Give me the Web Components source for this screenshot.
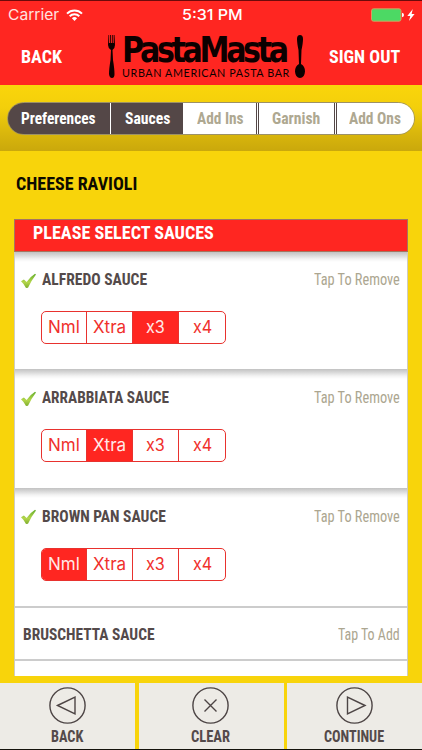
<!DOCTYPE html>
<html lang="en">
<head>
<meta charset="utf-8">
<title>PastaMasta</title>
<style>
    body {
        margin: 0;
        background: #f8d40b;
    }
</style>
</head>
<body>
<pasta-app></pasta-app>

<script>
// Single line of text squeezed or stretched to an exact width
class FitText extends HTMLElement {
    constructor() {
        super();
        this.attachShadow({ mode: 'open' });
        this.shadowRoot.innerHTML = `
            <style>
                :host {
                    display: block;
                    flex: none;
                    height: 1.2em;
                    line-height: 1.2em;
                    white-space: nowrap;
                }
                span {
                    display: inline-block;
                    transform-origin: 0 50%;
                }
            </style>
            <span><slot></slot></span>
        `;
    }

    connectedCallback() {
        const width = Number(this.getAttribute('width'));
        const span = this.shadowRoot.querySelector('span');
        this.style.width = width + 'px';
        span.style.transform = `scaleX(${width / span.offsetWidth})`;
    }
}

class StatusBar extends HTMLElement {
    constructor() {
        super();
        this.attachShadow({ mode: 'open' });
        this.shadowRoot.innerHTML = `
            <style>
                :host {
                    display: grid;
                    grid-template-columns: 1fr auto 1fr;
                    align-items: center;
                    height: 28px;
                    box-sizing: border-box;
                    padding: 1px 6px 0 8px;
                    border-top: 1px solid #6d0a0a;
                    font: 15px Inter, sans-serif;
                    color: #fff;
                }
                .left, .right { display: flex; align-items: center; }
                .left { gap: 7px; color: #ffe3e0; }
                .right { justify-content: flex-end; }
                .time { font-weight: 500; }
                svg { display: block; }
            </style>
            <div class="left">
                <fit-text width="51">Carrier</fit-text>
                <svg width="17" height="12" viewBox="0 0 17 12" fill="none" stroke="#fff" stroke-width="2">
                    <path d="M1 4.6a10.6 10.6 0 0 1 15 0M3.7 7.3a6.8 6.8 0 0 1 9.6 0"/>
                    <path d="M8.500 12L5.900 9.300a3.700 3.700 0 0 1 5.200 0z" fill="#fff" stroke="none"/>
                </svg>
            </div>
            <fit-text class="time" width="61">5:31 PM</fit-text>
            <div class="right">
                <svg width="45" height="14" viewBox="0 0 45 14">
                    <rect x=".5" y=".8" width="29.500" height="12.400" rx="2" fill="#4cd964" stroke="#d99a60"/>
                    <path d="M31 4.800q2 .4 2 2.200t-2 2.200z" fill="#fff"/>
                    <path d="M41.800 1l-5.500 7h3l-1.300 5 5.600-7h-3z" fill="#fff"/>
                </svg>
            </div>
        `;
    }
}

class PastaLogo extends HTMLElement {
    constructor() {
        super();
        this.attachShadow({ mode: 'open' });
        this.shadowRoot.innerHTML = `
            <style>
                :host {
                    display: flex;
                    justify-content: space-between;
                    width: 198px;
                    height: 44px;
                    color: #0d0000;
                }
                .words { display: flex; flex-direction: column; }
                .name {
                    font: bold 36px "DejaVu Sans", sans-serif;
                    letter-spacing: -4px;
                    height: 33px;
                    line-height: 29px;
                }
                .sub {
                    font: 10.5px Lato, sans-serif;
                    letter-spacing: .6px;
                    height: 11px;
                    line-height: 11px;
                }
            </style>
            <svg width="9" height="44" viewBox="0 0 9 44" fill="#0d0000">
                <path d="M1.500 0h.6v8h1V0h.8v8h1V0h.8v8h1V0h.8l.5 10q0 3-2.500 5l.5 10q1.500 9 1.500 14 0 4-2.500 4T2 39q0-5 1.500-14L4 15q-3-2-3-5z"/>
            </svg>
            <div class="words">
                <fit-text class="name" width="164">PastaMasta</fit-text>
                <fit-text class="sub" width="168">URBAN AMERICAN PASTA BAR</fit-text>
            </div>
            <svg width="10" height="44" viewBox="0 0 10 44" fill="#0d0000">
                <path d="M5 0q3 0 3 4 0 4-1.500 11L6 29q4 2 4 7.500Q9.500 43 5 43T0 36.500Q0 31 4 29l-.5-14Q2 8 2 4q0-4 3-4z"/>
            </svg>
        `;
    }
}

class AppHeader extends HTMLElement {
    constructor() {
        super();
        this.attachShadow({ mode: 'open' });
        this.shadowRoot.innerHTML = `
            <style>
                :host {
                    display: block;
                    height: 85px;
                    background: #ff2621;
                    color: #fff;
                }
                .bar {
                    display: grid;
                    grid-template-columns: 86px 198px 1fr;
                    align-items: center;
                    height: 57px;
                    padding: 0 22px 0 21px;
                    font-size: 18px;
                    font-weight: 700;
                }
                .end { justify-self: end; }
            </style>
            <status-bar></status-bar>
            <div class="bar">
                <fit-text width="41">BACK</fit-text>
                <pasta-logo></pasta-logo>
                <fit-text class="end" width="71">SIGN OUT</fit-text>
            </div>
        `;
    }
}

class StepBar extends HTMLElement {
    constructor() {
        super();
        this.attachShadow({ mode: 'open' });
        this.shadowRoot.innerHTML = `
            <style>
                :host {
                    display: block;
                    height: 66px;
                    box-sizing: border-box;
                    padding: 17px 7px 0;
                    background: linear-gradient(#fad50b 0%, #f3cf0b 35%, #dab70c 72%, #caa80c 100%);
                }
                .steps {
                    display: grid;
                    grid-template-columns: 102px 73px 73px 78px 1fr;
                    height: 33px;
                    box-sizing: border-box;
                    border: 1px solid #9c9166;
                    border-radius: 17px;
                    overflow: hidden;
                    font-size: 16px;
                    font-weight: 700;
                }
                .steps div {
                    display: flex;
                    align-items: center;
                    justify-content: center;
                    box-sizing: border-box;
                    padding-right: 2px;
                    background: #fff;
                    color: #aea891;
                }
                .steps .done { background: #544747; color: #fff; }
                .done + .done { border-left: 1px solid #fff; padding-right: 0; }
                .steps .open { padding: 0 0 0 2px; }
                .edge { border-left: 3px double #544747; }
            </style>
            <div class="steps">
                <div class="done"><fit-text width="75">Preferences</fit-text></div>
                <div class="done"><fit-text width="45">Sauces</fit-text></div>
                <div class="open"><fit-text width="47">Add Ins</fit-text></div>
                <div class="edge"><fit-text width="48">Garnish</fit-text></div>
                <div class="edge"><fit-text width="52">Add Ons</fit-text></div>
            </div>
        `;
    }
}

class AmountPicker extends HTMLElement {
    constructor() {
        super();
        this.attachShadow({ mode: 'open' });
    }

    connectedCallback() {
        const options = [['Nml', 32], ['Xtra', 33], ['x3', 19], ['x4', 19]];
        const selected = this.getAttribute('value');
        this.shadowRoot.innerHTML = `
            <style>
                :host {
                    display: grid;
                    grid-template-columns: 44px 46px 46px 1fr;
                    width: 185px;
                    height: 33px;
                    box-sizing: border-box;
                    border: 1px solid #e8322e;
                    border-radius: 5px;
                    overflow: hidden;
                    font: 17px Inter, sans-serif;
                    color: #f0302c;
                }
                div {
                    display: flex;
                    align-items: center;
                    justify-content: center;
                }
                div + div { border-left: 1px solid #e8322e; }
                .on { background: #ff2621; color: #ffe9e8; }
            </style>
            ${options.map(([name, width]) => `
                <div class="${name === selected ? 'on' : ''}"><fit-text width="${width}">${name}</fit-text></div>
            `).join('')}
        `;
    }
}

class SauceRow extends HTMLElement {
    constructor() {
        super();
        this.attachShadow({ mode: 'open' });
    }

    connectedCallback() {
        const amount = this.getAttribute('amount');
        this.shadowRoot.innerHTML = `
            <style>
                :host {
                    display: block;
                    flex: none;
                    height: 118.5px;
                    box-sizing: border-box;
                    padding: 19px 7px 0 6px;
                    background: linear-gradient(#c2c2c2, #d6d6d6 3px, #f3f3f3 7px, #fff 10px) #fff;
                    font-size: 16px;
                    color: #544a4a;
                }
                :host([first]) { height: 117px; padding-top: 18px; }
                :host([plain]) {
                    height: 52.7px;
                    padding: 17px 7px 0 8px;
                    border-top: 2.5px solid #ccc;
                    background: #fff;
                }
                .line {
                    display: flex;
                    align-items: center;
                    height: 20px;
                }
                .line svg { margin: 1px 5px 0 0; flex: none; }
                .name { font-weight: 700; }
                .hint { margin-left: auto; color: #aca690; }
                amount-picker { margin: 21px 0 0 20px; }
            </style>
            <div class="line">
                ${amount ? `
                <svg width="16" height="16" viewBox="0 0 16 16">
                    <defs>
                        <linearGradient id="g" x1="0" y1="0" x2="0" y2="1">
                            <stop offset="0" stop-color="#63ad2c"/>
                            <stop offset=".6" stop-color="#b4d64b"/>
                            <stop offset="1" stop-color="#7fae2e"/>
                        </linearGradient>
                    </defs>
                    <path d="M0 8.300L2.900 6.600 5.600 9Q9.300 3.500 14 .7l1 .9Q10.500 7.500 7 14.700l-2 .2Q3 11 0 8.300z" fill="url(#g)"/>
                </svg>` : ''}
                <fit-text class="name" width="${this.getAttribute('width')}"><slot></slot></fit-text>
                <fit-text class="hint" width="${amount ? 86 : 62}">${amount ? 'Tap To Remove' : 'Tap To Add'}</fit-text>
            </div>
            ${amount ? `<amount-picker value="${amount}"></amount-picker>` : ''}
        `;
    }
}

class SauceList extends HTMLElement {
    constructor() {
        super();
        this.attachShadow({ mode: 'open' });
        this.shadowRoot.innerHTML = `
            <style>
                :host {
                    display: flex;
                    flex-direction: column;
                    height: 457px;
                    margin: 0 14px;
                    background: #fff;
                    overflow: hidden;
                }
                .title {
                    flex: none;
                    height: 33px;
                    box-sizing: border-box;
                    padding: 2px 18px 0;
                    border: 1px solid #a5755f;
                    background: #ff2621;
                    color: #fff;
                    font-size: 18px;
                    font-weight: 700;
                }
                .rows {
                    flex: 1;
                    min-height: 0;
                    display: flex;
                    flex-direction: column;
                    border: solid #cfccc0;
                    border-width: 0 1px;
                    overflow: hidden;
                }
                .next { flex: none; height: 20px; border-top: 2.5px solid #ccc; }
            </style>
            <div class="title"><fit-text width="181">PLEASE SELECT SAUCES</fit-text></div>
            <div class="rows">
                <slot></slot>
                <div class="next"></div>
            </div>
        `;
    }
}

class ToolButton extends HTMLElement {
    constructor() {
        super();
        this.attachShadow({ mode: 'open' });
    }

    connectedCallback() {
        const shapes = {
            back: 'M8.500 18.500L26 10v17z',
            clear: 'M12.500 12.500l12 12m0-12l-12 12',
            next: 'M29 18.500L11.500 10v17z'
        };
        this.shadowRoot.innerHTML = `
            <style>
                :host {
                    display: flex;
                    flex-direction: column;
                    align-items: center;
                    background: #edebe6;
                    padding: 4px 1px 0 0;
                    font-size: 16px;
                    font-weight: 700;
                    color: #544a4a;
                }
                svg { display: block; margin-bottom: 3px; }
            </style>
            <svg width="37" height="37" viewBox="0 0 37 37" fill="none" stroke="#4d4545" stroke-width="1.400">
                <circle cx="18.500" cy="18.500" r="17.600"/>
                <path d="${shapes[this.getAttribute('icon')]}"/>
            </svg>
            <fit-text width="${this.getAttribute('width')}"><slot></slot></fit-text>
        `;
    }
}

class PastaApp extends HTMLElement {
    constructor() {
        super();
        this.attachShadow({ mode: 'open' });
        this.shadowRoot.innerHTML = `
            <style>
                :host {
                    display: flex;
                    flex-direction: column;
                    width: 422px;
                    height: 750px;
                    overflow: hidden;
                    background: #f8d40b;
                    font-family: "Roboto Condensed", Roboto, sans-serif;
                    font-stretch: 75%;
                }
                .dish {
                    height: 68px;
                    box-sizing: border-box;
                    padding: 22px 16px 0;
                    font-size: 18px;
                    font-weight: 700;
                    color: #0d0a00;
                }
                .tools {
                    display: grid;
                    grid-template-columns: 135px 145px 135px;
                    gap: 3.5px;
                    height: 67px;
                    box-sizing: border-box;
                    margin-top: auto;
                    border-bottom: 1px solid #15130c;
                }
            </style>
            <app-header></app-header>
            <step-bar></step-bar>
            <div class="dish"><fit-text width="121">CHEESE RAVIOLI</fit-text></div>
            <sauce-list>
                <sauce-row first amount="x3" width="105">ALFREDO SAUCE</sauce-row>
                <sauce-row amount="Xtra" width="127">ARRABBIATA SAUCE</sauce-row>
                <sauce-row amount="Nml" width="124">BROWN PAN SAUCE</sauce-row>
                <sauce-row plain width="132">BRUSCHETTA SAUCE</sauce-row>
            </sauce-list>
            <div class="tools">
                <tool-button icon="back" width="32">BACK</tool-button>
                <tool-button icon="clear" width="39">CLEAR</tool-button>
                <tool-button icon="next" width="60">CONTINUE</tool-button>
            </div>
        `;
    }
}

customElements.define('fit-text', FitText);
customElements.define('status-bar', StatusBar);
customElements.define('pasta-logo', PastaLogo);
customElements.define('app-header', AppHeader);
customElements.define('step-bar', StepBar);
customElements.define('amount-picker', AmountPicker);
customElements.define('sauce-row', SauceRow);
customElements.define('sauce-list', SauceList);
customElements.define('tool-button', ToolButton);
customElements.define('pasta-app', PastaApp);
</script>
</body>
</html>
